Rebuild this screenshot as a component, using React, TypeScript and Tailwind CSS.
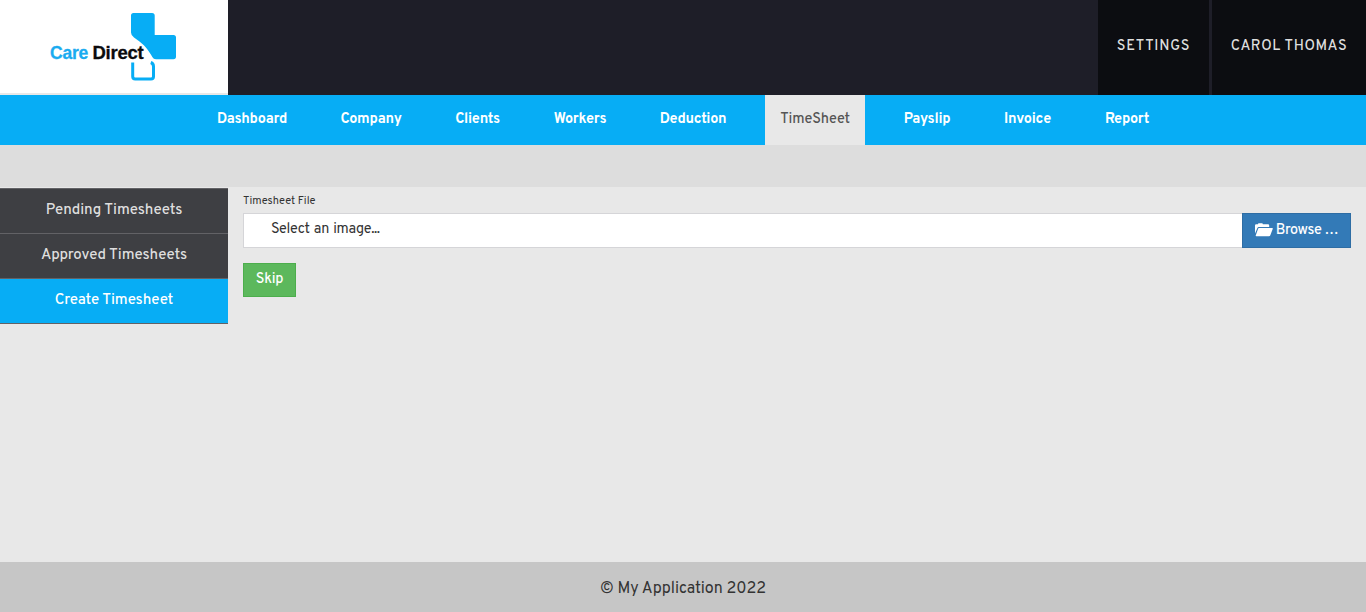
const nav = [
  { label: "Dashboard", box: "w-[99px] pl-[2px]" },
  { label: "Company", box: "w-[91px] pl-[2px]" },
  { label: "Clients", box: "w-[74px] pl-[2px]" },
  { label: "Workers", box: "w-[83px] pl-[2px]" },
  { label: "Deduction", box: "w-[96px] pl-px" },
  { label: "TimeSheet", box: "w-[100px] pl-px", active: true },
  { label: "Payslip", box: "w-[77px]" },
  { label: "Invoice", box: "w-[77px] pr-px" },
  { label: "Report", box: "w-[74px] pr-px" },
];

function Logo() {
  return (
    <svg width="228" height="93" viewBox="0 0 228 93" className="block" role="img" aria-label="Care Direct">
      <path
        d="M131 15.500Q131 13 133.500 13H152Q154.700 13 154.700 15.500V35H173.500Q176 35 176 37.500V56.500Q176 59.200 173.500 59.200H156Q153.500 59.200 152.300 57C149.500 52 146 46.500 139.500 41.500L134 37.500Q131 35.500 131 32.500Z"
        fill="#07adf5"
      />
      <path d="M132.700 62.500V76.500Q132.700 79 135.200 79H151Q153.500 79 153.500 76.500V66.500Q153.500 63.500 150.800 62.500" fill="none" stroke="#07adf5" strokeWidth="3" />
      <g fontFamily="'Liberation Sans', sans-serif" fontWeight="700" fontSize="19" strokeWidth=".3">
        <text x="50" y="58.500" fill="#1aabf0" stroke="#1aabf0" textLength="38" lengthAdjust="spacingAndGlyphs">Care</text>
        <text x="92.500" y="58.500" fill="#0b0b0d" stroke="#0b0b0d" textLength="51" lengthAdjust="spacingAndGlyphs">Direct</text>
      </g>
    </svg>
  );
}

function FolderOpen() {
  return (
    <svg width="18" height="14" viewBox="0 0 18 14" fill="white" className="mr-[3px] block shrink-0 -translate-y-px">
      <path d="M0 10.500V2.500Q0 1.300 1.200 1.300H3V1Q3 .2 3.800 .2H7Q7.800 .2 7.800 1V1.300H13Q14.200 1.300 14.200 2.500V4H3.800Q2.800 4 2.400 5Z" />
      <path d="M4 5H17.300Q18.100 5 17.800 5.800L15.300 12.300Q15 13.200 14 13.200H1.300Q.4 13.200 .8 12.300L3.200 5.600Q3.400 5 4 5Z" />
    </svg>
  );
}

export default function App() {
  return (
    <div className="flex h-[612px] w-full flex-col bg-[#e8e8e8] font-[Overpass,Roboto,sans-serif] text-[14.4px] tracking-[-0.24px] text-[#333]">
      <header className="flex h-[95px] shrink-0 bg-[#1e1e28]">
        <div className="h-[95px] w-[228px] border-b-2 border-[#e8e8e8] bg-white">
          <Logo />
        </div>
        <div className="ml-auto flex gap-[3px] font-medium text-[#dedede]">
          <a className="flex w-[111px] items-center justify-center bg-[#0c0d11] pb-px tracking-[0.8px]">SETTINGS</a>
          <a className="flex w-[154px] items-center justify-center bg-[#0c0d11] pb-px tracking-[0.68px]">CAROL THOMAS</a>
        </div>
      </header>
      <nav className="flex h-[50px] shrink-0 justify-center gap-[24px] bg-[#07adf5]">
        {nav.map((n) => (
          <a
            key={n.label}
            className={`flex shrink-0 justify-center whitespace-nowrap pt-[15px] leading-[20px] ${n.box} ${n.active ? "bg-[#e8e8e8] font-medium tracking-[-0.15px] text-[#555]" : "font-bold text-white"}`}
          >
            {n.label}
          </a>
        ))}
      </nav>
      <div className="h-[42px] shrink-0 bg-[#ddd]" />
      <main className="flex flex-1">
        <aside className="mt-px w-[228px] text-center text-[15px] font-medium leading-[20px] tracking-[-0.1px] text-[#dedede]">
          <a className="block h-[45px] border-t border-[#626266] bg-[#3e3f43] pt-[12px]">Pending Timesheets</a>
          <a className="block h-[45px] border-t border-[#626266] bg-[#3e3f43] pt-[12px]">Approved Timesheets</a>
          <a className="block h-[46px] border-y border-[#626266] bg-[#07adf5] pt-[12px] text-white">Create Timesheet</a>
        </aside>
        <section className="flex-1 px-[15px] pt-[5px]">
          <div className="h-[21px] pt-px text-[11px] leading-[17px] tracking-normal">Timesheet File</div>
          <div className="flex h-[35px]">
            <div className="flex-1 border border-r-0 border-[#d5d5d8] bg-white pl-[27px] pt-[6px] leading-[20px] tracking-[-0.28px] [word-spacing:1px]">Select an image...</div>
            <button className="flex w-[109px] items-center justify-center whitespace-nowrap border border-[#2e6da4] bg-[#337ab7] font-medium tracking-[-0.35px] text-white">
              <FolderOpen />
              <span>Browse …</span>
            </button>
          </div>
          <button className="mt-[15px] block h-[34px] w-[53px] border border-[#4cae4c] bg-[#5cb85c] pb-px font-medium text-white">Skip</button>
        </section>
      </main>
      <footer className="flex h-[50px] shrink-0 items-center justify-center bg-[#c6c6c6] pt-[3px] text-[16px] tracking-normal">© My Application 2022</footer>
    </div>
  );
}
